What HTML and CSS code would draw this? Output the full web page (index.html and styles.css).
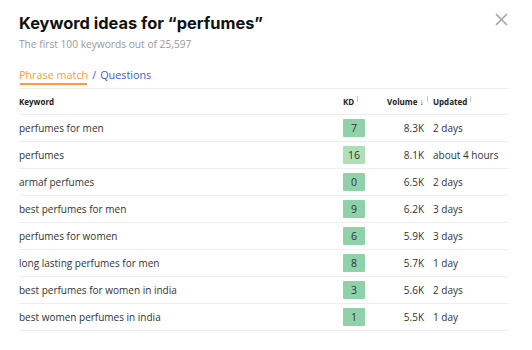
FILE: index.html
```html
<!DOCTYPE html>
<html lang="en">

<head>
  <meta charset="UTF-8">
  <meta name="viewport" content="width=device-width, initial-scale=1.0">
  <title>Keyword ideas</title>
  <link rel="stylesheet" href="styles.css">
</head>

<body>
  <div class="modal">
    <button class="close-btn" aria-label="Close">
      <svg width="13" height="13" viewBox="0 0 13 13"><path d="M1 1L12 12M12 1L1 12" stroke="#a5a5a5" stroke-width="1.6" fill="none"/></svg>
    </button>

    <h1 class="modal-title">Keyword ideas for “perfumes”</h1>
    <p class="modal-sub">The first 100 keywords out of 25,597</p>

    <div class="tabs">
      <span class="tab active">Phrase match</span>
      <span class="tab-sep">/</span>
      <span class="tab">Questions</span>
    </div>

    <div class="kw-table">
      <div class="kw-row kw-head">
        <div>Keyword</div>
        <div>KD <span class="sort"></span></div>
        <div class="nowrap">Volume <span class="arrow">↓</span> <span class="sort"></span></div>
        <div class="upd">Updated <span class="sort"></span></div>
      </div>

      <div class="kw-row">
        <div>perfumes for men</div>
        <div><span class="kd">7</span></div>
        <div class="vol">8.3K</div>
        <div class="upd">2 days</div>
      </div>
      <div class="kw-row">
        <div>perfumes</div>
        <div><span class="kd light">16</span></div>
        <div class="vol">8.1K</div>
        <div class="upd">about 4 hours</div>
      </div>
      <div class="kw-row">
        <div>armaf perfumes</div>
        <div><span class="kd">0</span></div>
        <div class="vol">6.5K</div>
        <div class="upd">2 days</div>
      </div>
      <div class="kw-row">
        <div>best perfumes for men</div>
        <div><span class="kd">9</span></div>
        <div class="vol">6.2K</div>
        <div class="upd">3 days</div>
      </div>
      <div class="kw-row">
        <div>perfumes for women</div>
        <div><span class="kd">6</span></div>
        <div class="vol">5.9K</div>
        <div class="upd">3 days</div>
      </div>
      <div class="kw-row">
        <div>long lasting perfumes for men</div>
        <div><span class="kd">8</span></div>
        <div class="vol">5.7K</div>
        <div class="upd">1 day</div>
      </div>
      <div class="kw-row">
        <div>best perfumes for women in india</div>
        <div><span class="kd">3</span></div>
        <div class="vol">5.6K</div>
        <div class="upd">2 days</div>
      </div>
      <div class="kw-row">
        <div>best women perfumes in india</div>
        <div><span class="kd">1</span></div>
        <div class="vol">5.5K</div>
        <div class="upd">1 day</div>
      </div>
    </div>
  </div>
</body>

</html>
```

FILE: styles.css
```css
body {
  margin: 0;
  background: #fff;
  font-family: "Open Sans", Arial, sans-serif;
  color: #333;
}

.modal {
  position: relative;
  padding: 12px 24px 0 19px;
}

.close-btn {
  position: absolute;
  top: 13px;
  right: 24px;
  border: none;
  background: none;
  padding: 0;
  cursor: pointer;
}

.modal-title {
  margin: 0;
  font-family: Inter, Arial, sans-serif;
  font-size: 16.4px;
  font-weight: 700;
  color: #111;
  line-height: 22px;
}

.modal-sub {
  margin: 2px 0 0;
  font-size: 10.2px;
  color: #999;
  line-height: 16px;
}

.tabs {
  margin-top: 15px;
  display: flex;
  gap: 4px;
  font-size: 10.8px;
  line-height: 16px;
  border-bottom: 1px solid #eee;
  padding-bottom: 5px;
}

.tab {
  color: #3d5bd9;
}

.tab.active {
  color: #ff9a3d;
  box-shadow: 0 3px 0 -1px #ff9a3d;
}

.tab-sep {
  color: #3d5bd9;
}

.kw-row {
  display: grid;
  grid-template-columns: 324px 44px 41px 1fr;
  align-items: center;
  height: 26px;
  border-bottom: 1px solid #eee;
  font-size: 10px;
}

.kw-head {
  height: 25px;
  font-size: 8px;
  font-weight: 700;
  color: #222;
}

.nowrap {
  white-space: nowrap;
}

.kw-head .arrow {
  font-size: 8px;
}

.sort {
  display: inline-block;
  width: 1px;
  height: 6px;
  margin-left: 1px;
  background: #ccc;
  vertical-align: 3px;
}

.vol {
  text-align: right;
  padding-right: 4px;
}

.upd {
  padding-left: 5px;
}

.kd {
  display: inline-block;
  width: 22px;
  height: 18px;
  line-height: 18px;
  text-align: center;
  font-size: 10.5px;
  background: #8fd1a9;
  border-radius: 1px;
}

.kd.light {
  background: #b0dfb5;
}
```
